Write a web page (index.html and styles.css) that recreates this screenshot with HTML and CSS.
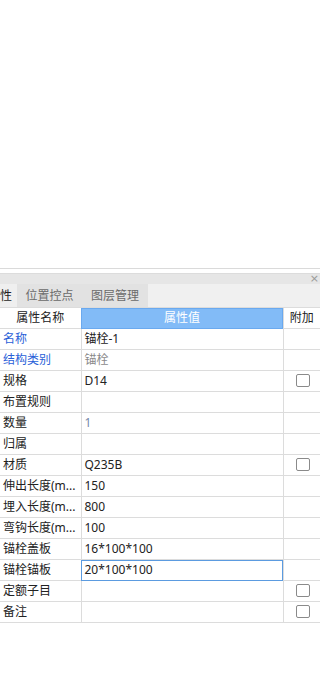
FILE: index.html
```html
<!DOCTYPE html>
<html lang="zh">
<head>
<meta charset="utf-8">
<link rel="stylesheet" href="styles.css">
</head>
<body>
<div class="canvas"></div>
<div class="panel">
  <div class="titlebar"><span class="close">×</span></div>
  <div class="tabs">
    <div class="tab active">性</div>
    <div class="tab t2">位置控点</div>
    <div class="tab t3">图层管理</div>
  </div>
  <table class="props">
    <tr class="head"><td class="c1">属性名称</td><td class="c2 hv">属性值</td><td class="c3">附加</td></tr>
    <tr><td class="c1 blue">名称</td><td class="c2">锚栓-1</td><td class="c3"></td></tr>
    <tr><td class="c1 blue">结构类别</td><td class="c2 gray">锚栓</td><td class="c3"></td></tr>
    <tr><td class="c1">规格</td><td class="c2">D14</td><td class="c3"><span class="cb"></span></td></tr>
    <tr><td class="c1">布置规则</td><td class="c2"></td><td class="c3"></td></tr>
    <tr><td class="c1">数量</td><td class="c2 slate">1</td><td class="c3"></td></tr>
    <tr><td class="c1">归属</td><td class="c2"></td><td class="c3"></td></tr>
    <tr><td class="c1">材质</td><td class="c2">Q235B</td><td class="c3"><span class="cb"></span></td></tr>
    <tr><td class="c1">伸出长度(m...</td><td class="c2">150</td><td class="c3"></td></tr>
    <tr><td class="c1">埋入长度(m...</td><td class="c2">800</td><td class="c3"></td></tr>
    <tr><td class="c1">弯钩长度(m...</td><td class="c2">100</td><td class="c3"></td></tr>
    <tr><td class="c1">锚栓盖板</td><td class="c2">16*100*100</td><td class="c3"></td></tr>
    <tr><td class="c1">锚栓锚板</td><td class="c2 sel">20*100*100</td><td class="c3"></td></tr>
    <tr><td class="c1">定额子目</td><td class="c2"></td><td class="c3"><span class="cb"></span></td></tr>
    <tr><td class="c1">备注</td><td class="c2"></td><td class="c3"><span class="cb"></span></td></tr>
  </table>
</div>
</body>
</html>
```
FILE: styles.css
```css
html, body {
  margin: 0;
  padding: 0;
  background: #fff;
}
body {
  width: 320px;
  height: 679px;
  overflow: hidden;
  font-family: "Noto Sans", "Noto Sans CJK SC", sans-serif;
  font-size: 12px;
  color: #222;
}
.canvas {
  height: 268px;
  border-bottom: 1px solid #dadada;
}
.panel {
  padding-top: 4px;
}
.titlebar {
  height: 10px;
  background: #e6e6e6;
  border-top: 1px solid #dcdcdc;
  display: flex;
  justify-content: flex-end;
  align-items: center;
}
.close {
  color: #9a9a9a;
  font-size: 11px;
  line-height: 10px;
  margin-right: 1px;
  font-family: "DejaVu Sans", sans-serif;
}
.tabs {
  height: 23px;
  background: #f0f0f0;
  display: flex;
  border-bottom: 1px solid #dcdcdc;
}
.tab {
  line-height: 23px;
  color: #6a6a6a;
  background: #e2e2e2;
  text-align: center;
  white-space: nowrap;
}
.tab.active {
  width: 17px;
  background: #efefef;
  color: #1e1e1e;
  text-align: left;
}
.t2 { width: 65px; }
.t3 { width: 66px; }
.props {
  border-collapse: collapse;
  table-layout: fixed;
  width: 320px;
}
.props td {
  height: 20px;
  padding: 0 0 0 3px;
  line-height: 20px;
  border-bottom: 1px solid #dcdcdc;
  white-space: nowrap;
  overflow: hidden;
  box-sizing: border-box;
}
.props .c1 { width: 81px; border-right: 1px solid #dcdcdc; }
.props .c2 { width: 202px; border-right: 1px solid #dcdcdc; }
.props .c3 { width: 37px; text-align: center; padding: 0; }
.head td { text-align: center; padding: 0; }
.props .hv {
  background: #82bbf7;
  color: #fff;
  outline: 1px solid #6aa9ef;
  outline-offset: -1px;
}
.blue { color: #2a5fd8; }
.gray { color: #8a8a8a; }
.slate { color: #7688a8; }
.props .sel {
  outline: 1px solid #5b9be0;
  outline-offset: -1px;
}
.cb {
  display: inline-block;
  width: 12px;
  height: 11px;
  border: 1px solid #8a8a8a;
  border-radius: 2px;
  vertical-align: middle;
  margin-left: 3px;
  margin-top: -2px;
}
```
